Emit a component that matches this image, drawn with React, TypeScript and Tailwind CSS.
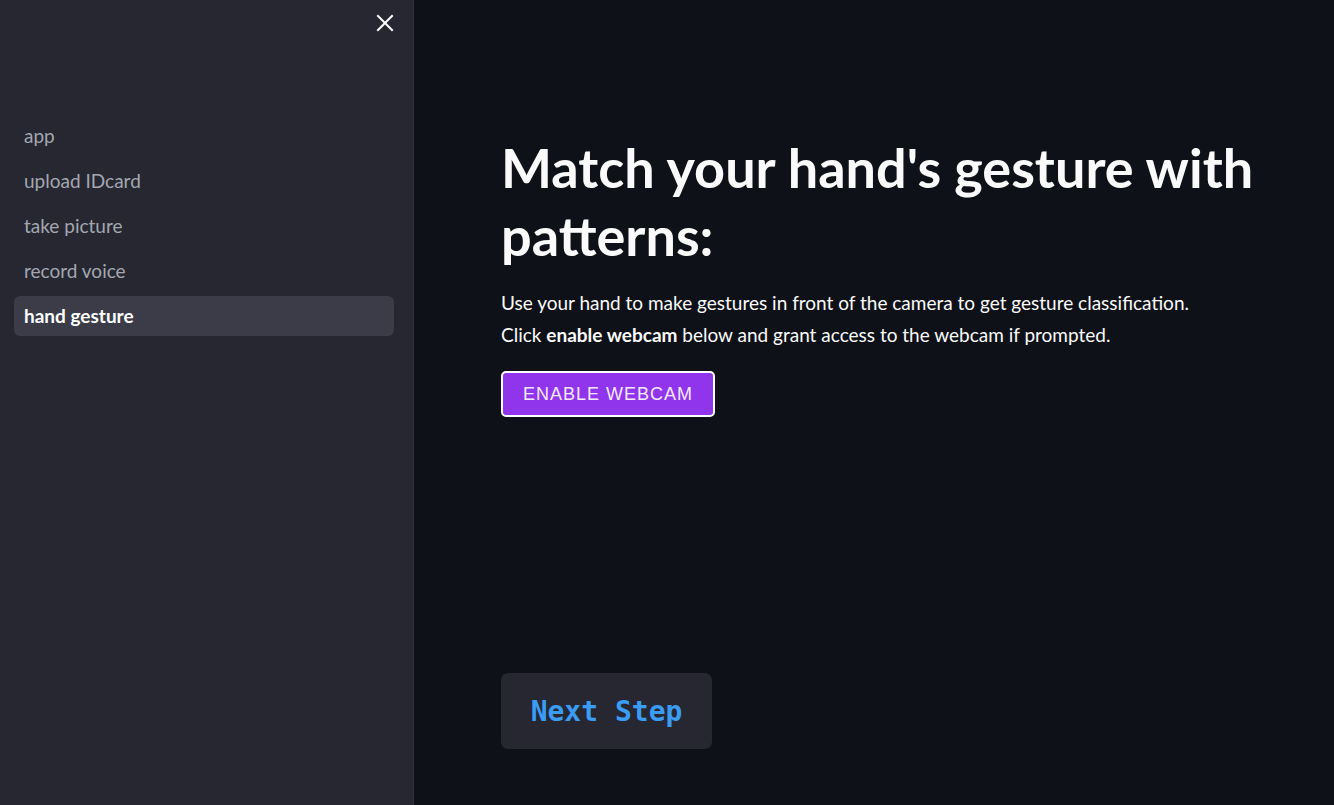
import React from "react";

const items = ["app", "upload IDcard", "take picture", "record voice", "hand gesture"];

export default function App() {
  return (
    <div className="flex h-[805px] w-[1334px] overflow-hidden bg-[#0e1117]" style={{ fontFamily: "Lato, 'Noto Sans', sans-serif" }}>
      <aside className="flex h-full w-[414px] shrink-0 flex-col bg-[#262730] border-r border-[#30313b]">
        <div className="flex justify-end pr-[19px] pt-[14px]">
          <svg width="18" height="18" viewBox="0 0 18 18" className="text-white">
            <path d="M2 2 L16 16 M16 2 L2 16" stroke="currentColor" strokeWidth="2" strokeLinecap="square" />
          </svg>
        </div>
        <nav className="mt-[84px] flex flex-col gap-[5px] pl-[14px] pr-[19px]">
          {items.map((it) => {
            const active = it === "hand gesture";
            return (
              <div
                key={it}
                className={
                  active
                    ? "flex h-[40px] items-center rounded-[6px] bg-[#3b3c48] px-[10px] text-[19px] font-bold text-white"
                    : "flex h-[40px] items-center rounded-[6px] px-[10px] text-[19px] text-[#a4a7b1]"
                }
              >
                {it}
              </div>
            );
          })}
        </nav>
      </aside>
      <main className="flex flex-1 flex-col pl-[87px] pt-[134px] text-[#fafafa]">
        <h1 className="w-[800px] text-[54px] font-bold leading-[68px]">Match your hand's gesture with patterns:</h1>
        <p className="mt-[17px] text-[19px] leading-[32px]">
          Use your hand to make gestures in front of the camera to get gesture classification.
          <br />
          Click <b>enable webcam</b> below and grant access to the webcam if prompted.
        </p>
        <div className="mt-[20px]">
          <button
            className="h-[46px] w-[214px] rounded-[5px] border-2 border-white bg-[#9035ec] text-[18px] tracking-[1px] text-[#f4e9ff]"
            style={{ fontFamily: "'Liberation Sans', Arial, sans-serif" }}
          >
            ENABLE WEBCAM
          </button>
        </div>
        <div className="mt-[256px]">
          <button
            className="h-[76px] w-[211px] rounded-[7px] bg-[#262730] pt-[2px] text-[28px] font-bold text-[#3a9cf5]"
            style={{ fontFamily: "'DejaVu Sans Mono', monospace" }}
          >
            Next Step
          </button>
        </div>
      </main>
    </div>
  );
}
